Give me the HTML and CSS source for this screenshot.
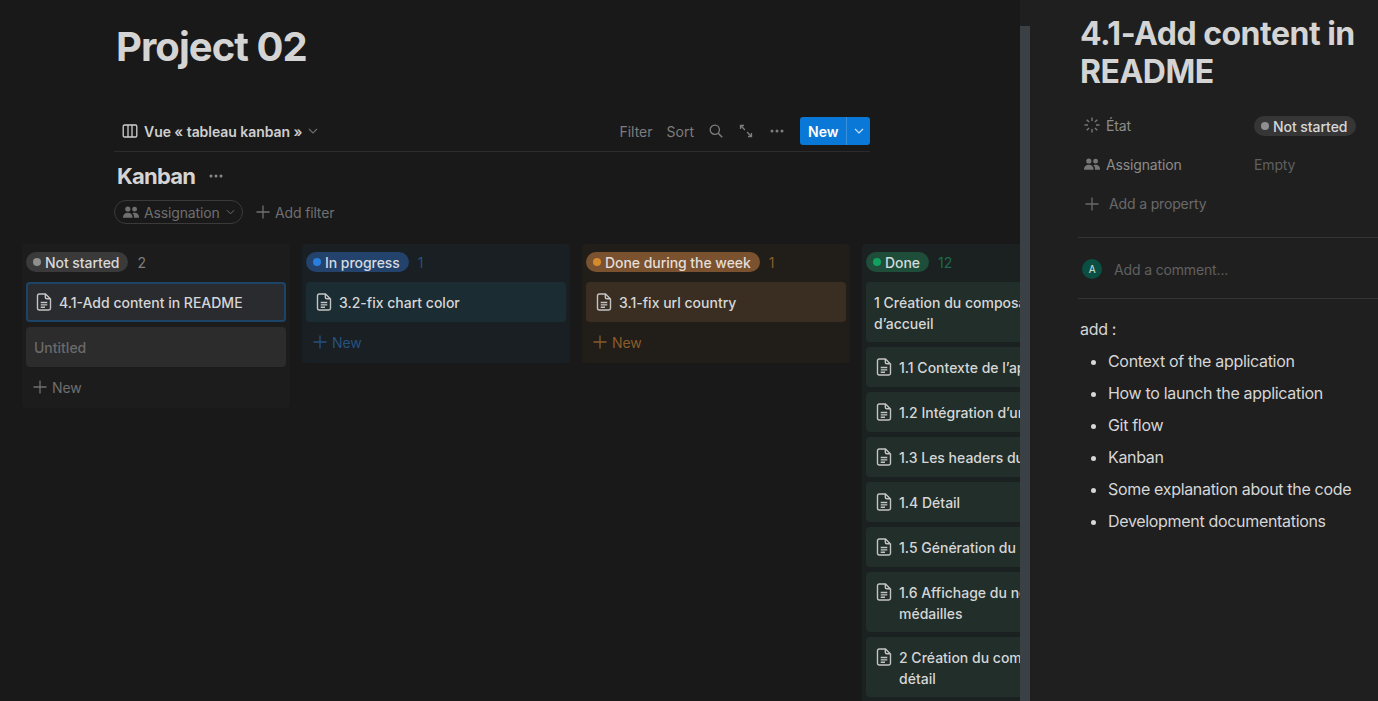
FILE: index.html
```html
<!DOCTYPE html>
<html lang="en">
<head>
    <meta charset="UTF-8">
    <title>Project 02</title>
    <link rel="stylesheet" href="styles.css">
</head>
<body>
    <svg class="icon-defs" width="0" height="0">
        <symbol id="i-page" viewBox="0 0 16 18">
            <path d="M3.200 1h6.300L14.500 6v9.300c0 1-.7 1.700-1.700 1.700H3.200c-1 0-1.700-.7-1.700-1.700V2.700c0-1 .7-1.700 1.700-1.700z M9.300 1.200v3.100c0 .9.600 1.500 1.500 1.500h3.500 M4.700 9.500h6.600 M4.700 11.900h6.600 M4.700 14.300h4.300" fill="none" stroke="currentColor" stroke-width="1.400"/>
        </symbol>
        <symbol id="i-plus" viewBox="0 0 14 14">
            <path d="M7 .5v13M.5 7h13" fill="none" stroke="currentColor" stroke-width="1.300"/>
        </symbol>
        <symbol id="i-people" viewBox="0 0 16 12">
            <circle cx="4.800" cy="3" r="2.600" fill="currentColor"/>
            <circle cx="11.600" cy="3.200" r="2.400" fill="currentColor"/>
            <path d="M0 11.200c0-2.700 2-4.500 4.800-4.500s4.800 1.800 4.800 4.500v.6H0zM11 11.800v-1c0-1.400-.5-2.700-1.500-3.600.6-.3 1.300-.4 2.100-.4 2.600 0 4.400 1.800 4.400 4.300v.7z" fill="currentColor"/>
        </symbol>
        <symbol id="i-chevron" viewBox="0 0 10 6">
            <path d="M1 1l4 4 4-4" fill="none" stroke="currentColor" stroke-width="1.100"/>
        </symbol>
        <symbol id="i-dots" viewBox="0 0 14 4">
            <circle cx="2" cy="2" r="1.500" fill="currentColor"/>
            <circle cx="7" cy="2" r="1.500" fill="currentColor"/>
            <circle cx="12" cy="2" r="1.500" fill="currentColor"/>
        </symbol>
    </svg>

    <div class="app">
        <main class="main">
            <h1 class="page-title">Project 02</h1>

            <div class="toolbar">
                <div class="view-tab">
                    <svg class="icon-table" viewBox="0 0 16 14"><path d="M2.500 1h11c.8 0 1.300.5 1.300 1.300v9.400c0 .8-.5 1.300-1.300 1.300h-11c-.8 0-1.300-.5-1.300-1.300V2.300C1.200 1.500 1.700 1 2.500 1zM6 1v12M10 1v12" fill="none" stroke="currentColor" stroke-width="1.300"/></svg>
                    <span>Vue « tableau kanban »</span>
                    <svg class="icon-chev"><use href="#i-chevron"/></svg>
                </div>
                <div class="actions">
                    <span>Filter</span>
                    <span class="sort">Sort</span>
                    <svg class="icon-search" viewBox="0 0 14 14"><circle cx="5.800" cy="5.800" r="4.600" fill="none" stroke="currentColor" stroke-width="1.300"/><path d="M9.200 9.200l4 4" stroke="currentColor" stroke-width="1.500"/></svg>
                    <svg class="icon-expand" viewBox="0 0 14 14"><path d="M1.500 5V1.500H5M1.500 1.500l4.500 4.500M12.500 9v3.500H9M12.500 12.500L8 8" fill="none" stroke="currentColor" stroke-width="1.300"/></svg>
                    <svg class="icon-dots"><use href="#i-dots"/></svg>
                    <div class="new-btn">
                        <span class="new-label">New</span>
                        <span class="new-arrow"><svg class="icon-chev"><use href="#i-chevron"/></svg></span>
                    </div>
                </div>
            </div>

            <div class="board-title">
                <h2>Kanban</h2>
                <svg class="icon-dots"><use href="#i-dots"/></svg>
            </div>

            <div class="filters">
                <div class="filter-pill">
                    <svg class="icon-people"><use href="#i-people"/></svg>
                    <span>Assignation</span>
                    <svg class="icon-chev"><use href="#i-chevron"/></svg>
                </div>
                <div class="add-filter">
                    <svg class="icon-plus"><use href="#i-plus"/></svg>
                    <span>Add filter</span>
                </div>
            </div>

            <div class="board">
                <section class="column col-grey">
                    <div class="col-head"><span class="pill"><i class="dot"></i>Not started</span><span class="count">2</span></div>
                    <div class="card selected"><svg class="icon-page"><use href="#i-page"/></svg><span>4.1-Add content in README</span></div>
                    <div class="card untitled"><span>Untitled</span></div>
                    <div class="col-new"><svg class="icon-plus"><use href="#i-plus"/></svg><span>New</span></div>
                </section>

                <section class="column col-blue">
                    <div class="col-head"><span class="pill"><i class="dot"></i>In progress</span><span class="count">1</span></div>
                    <div class="card"><svg class="icon-page"><use href="#i-page"/></svg><span>3.2-fix chart color</span></div>
                    <div class="col-new"><svg class="icon-plus"><use href="#i-plus"/></svg><span>New</span></div>
                </section>

                <section class="column col-orange">
                    <div class="col-head"><span class="pill"><i class="dot"></i>Done during the week</span><span class="count">1</span></div>
                    <div class="card"><svg class="icon-page"><use href="#i-page"/></svg><span>3.1-fix url country</span></div>
                    <div class="col-new"><svg class="icon-plus"><use href="#i-plus"/></svg><span>New</span></div>
                </section>

                <section class="column col-green">
                    <div class="col-head"><span class="pill"><i class="dot"></i>Done</span><span class="count">12</span></div>
                    <div class="card two-line no-icon"><span>1 Création du composant de la page d’accueil</span></div>
                    <div class="card"><svg class="icon-page"><use href="#i-page"/></svg><span class="clip">1.1 Contexte de l’application</span></div>
                    <div class="card"><svg class="icon-page"><use href="#i-page"/></svg><span class="clip">1.2 Intégration d’une librairie</span></div>
                    <div class="card"><svg class="icon-page"><use href="#i-page"/></svg><span class="clip">1.3 Les headers du tableau</span></div>
                    <div class="card"><svg class="icon-page"><use href="#i-page"/></svg><span class="clip">1.4 Détail</span></div>
                    <div class="card"><svg class="icon-page"><use href="#i-page"/></svg><span class="clip">1.5 Génération du graphique</span></div>
                    <div class="card two-line"><svg class="icon-page"><use href="#i-page"/></svg><span>1.6 Affichage du nombre de<br>médailles</span></div>
                    <div class="card two-line"><svg class="icon-page"><use href="#i-page"/></svg><span>2 Création du composant de<br>détail</span></div>
                </section>
            </div>
        </main>

        <aside class="panel">
            <div class="scrollbar"></div>
            <h2 class="panel-title">4.1-Add content in README</h2>

            <div class="props">
                <div class="prop first">
                    <div class="prop-name">
                        <svg class="prop-icon" viewBox="0 0 16 16"><path d="M8 .5v3.500M8 12v3.500M.5 8H4M12 8h3.500M2.700 2.700l2.400 2.400M10.900 10.900l2.400 2.400M2.700 13.300l2.400-2.400M10.900 5.100l2.400-2.400" fill="none" stroke="currentColor" stroke-width="1.400"/></svg>
                        <span>État</span>
                    </div>
                    <span class="pill pill-prop"><i class="dot"></i>Not started</span>
                </div>
                <div class="prop">
                    <div class="prop-name">
                        <svg class="prop-icon people"><use href="#i-people"/></svg>
                        <span>Assignation</span>
                    </div>
                    <span class="empty">Empty</span>
                </div>
                <div class="add-prop">
                    <svg class="icon-plus"><use href="#i-plus"/></svg>
                    <span>Add a property</span>
                </div>
            </div>

            <div class="comment">
                <span class="avatar">A</span>
                <span>Add a comment...</span>
            </div>

            <div class="body-text">
                <p>add :</p>
                <ul>
                    <li>Context of the application</li>
                    <li>How to launch the application</li>
                    <li>Git flow</li>
                    <li>Kanban</li>
                    <li>Some explanation about the code</li>
                    <li>Development documentations</li>
                </ul>
            </div>
        </aside>
    </div>
</body>
</html>
```

FILE: styles.css
```css
* {
    box-sizing: border-box;
}

html, body {
    height: 100%;
}

body {
    margin: 0;
    overflow: hidden;
    background-color: #191919;
    color: rgba(255,255,255,0.81);
    font-family: Inter, "Liberation Sans", sans-serif;
    font-size: 14px;
}

svg {
    display: block;
    flex-shrink: 0;
}

.icon-defs {
    position: absolute;
}

.app {
    display: flex;
    height: 701px;
}

/* left side */
.main {
    width: 1020px;
    height: 701px;
    overflow: hidden;
    flex-shrink: 0;
}

.page-title {
    margin: 0;
    padding: 23px 0 0 116px;
    height: 114px;
    font-size: 40px;
    line-height: 48px;
    font-weight: 700;
    letter-spacing: -0.95px;
    color: #d4d4d4;
}

.toolbar {
    display: flex;
    justify-content: space-between;
    align-items: center;
    margin-left: 114px;
    width: 756px;
    height: 38px;
    padding: 0 0 3px 8px;
    border-bottom: 1px solid #2c2c2c;
}

.view-tab {
    display: flex;
    align-items: center;
    font-weight: 600;
    letter-spacing: -0.05px;
    color: #cfcfcf;
}

.icon-table {
    width: 16px;
    height: 14px;
    margin-right: 6px;
}

.view-tab .icon-chev {
    margin-left: 6px;
    color: #6e6e6e;
}

.icon-chev {
    width: 10px;
    height: 6px;
}

.actions {
    display: flex;
    align-items: center;
    color: #7d7d7d;
}

.sort {
    margin-left: 14px;
}

.icon-search {
    width: 14px;
    height: 14px;
    margin-left: 15px;
}

.icon-expand {
    width: 14px;
    height: 14px;
    margin-left: 16px;
}

.icon-dots {
    width: 14px;
    height: 4px;
}

.actions .icon-dots {
    margin-left: 17px;
}

.new-btn {
    display: flex;
    align-items: stretch;
    height: 28px;
    margin-left: 16px;
    border-radius: 3px;
    background-color: #0a78d6;
    color: white;
    font-weight: 600;
}

.new-label {
    display: flex;
    align-items: center;
    padding: 0 8px;
    width: 47px;
    border-right: 1px solid #3a8fdb;
}

.new-arrow {
    display: flex;
    align-items: center;
    justify-content: center;
    width: 23px;
}

.new-arrow .icon-chev {
    color: #cfe4f7;
}

.board-title {
    display: flex;
    align-items: center;
    height: 48px;
    margin-left: 117px;
}

.board-title h2 {
    margin: 0;
    font-size: 22px;
    font-weight: 700;
    letter-spacing: -0.8px;
    color: #d4d4d4;
}

.board-title .icon-dots {
    margin-left: 14px;
    color: #8a8a8a;
}

.filters {
    display: flex;
    align-items: center;
    height: 24px;
    margin: 0 0 20px 114px;
    color: #6f6f6f;
    letter-spacing: -0.15px;
}

.filter-pill {
    display: flex;
    align-items: center;
    height: 24px;
    width: 129px;
    padding-left: 8px;
    border: 1px solid #3a3a3a;
    border-radius: 12px;
}

.icon-people {
    width: 16px;
    height: 12px;
    margin-right: 5px;
}

.filter-pill .icon-chev {
    margin-left: 6px;
    width: 9px;
}

.add-filter {
    display: flex;
    align-items: center;
    margin-left: 13px;
}

.icon-plus {
    width: 14px;
    height: 14px;
    margin-right: 5px;
}

/* kanban board */
.board {
    display: flex;
    gap: 12px;
    padding-left: 22px;
}

.column {
    width: 268px;
    flex-shrink: 0;
    padding: 8px 4px 6px;
    border-radius: 4px;
    align-self: flex-start;
}

.col-grey { background-color: #1c1c1c; }
.col-blue { background-color: #1a1f23; }
.col-orange { background-color: #211d19; }
.col-green { background-color: #1b2120; min-height: 460px; }

.col-head {
    display: flex;
    align-items: center;
    height: 20px;
    margin-bottom: 10px;
}

.pill {
    display: inline-flex;
    align-items: center;
    height: 20px;
    padding: 0 9px 0 7px;
    border-radius: 10px;
    font-weight: 500;
    letter-spacing: -0.05px;
    white-space: nowrap;
}

.dot {
    width: 8px;
    height: 8px;
    margin-right: 4px;
    border-radius: 50%;
}

.count {
    margin-left: 9px;
}

.card {
    display: flex;
    align-items: flex-start;
    width: 260px;
    margin-bottom: 5px;
    padding: 10px 10px 9px;
    border-radius: 4px;
    line-height: 21px;
    font-weight: 500;
    color: #d6d6d6;
}

.card.two-line {
    padding-bottom: 8px;
}

.card .icon-page {
    width: 16px;
    height: 18px;
    margin: 1px 7px 0 0;
    color: #c4c4c4;
}

.card.no-icon {
    padding-left: 8px;
}

.clip {
    white-space: nowrap;
}

.col-new {
    display: flex;
    align-items: center;
    height: 30px;
    padding-left: 7px;
    letter-spacing: -0.15px;
}

.col-grey .pill { background-color: #3a3a3a; }
.col-grey .dot { background-color: #8f8f8f; }
.col-grey .count { color: #7d7d7d; }
.col-grey .col-new { color: #6f6f6f; }

.card.selected {
    background-color: #2a2b2f;
    box-shadow: inset 0 0 0 2px #1c4466;
}

.card.untitled {
    background-color: #2c2c2c;
    padding-left: 8px;
    color: #6a6a6a;
}

.col-blue .pill { background-color: #23426c; }
.col-blue .dot { background-color: #2a7fde; }
.col-blue .count { color: #25527f; }
.col-blue .card { background-color: #1c2c33; }
.col-blue .col-new { color: #25527f; }

.col-orange .pill { background-color: #7a5230; }
.col-orange .dot { background-color: #d58a2c; }
.col-orange .count { color: #8a5c2a; }
.col-orange .card { background-color: #3a2e23; }
.col-orange .col-new { color: #8a5c2a; }

.col-green .pill { background-color: #1e4d3a; }
.col-green .dot { background-color: #12a05f; }
.col-green .count { color: #1c6a4a; }
.col-green .card { background-color: #212e2a; }

/* detail panel */
.panel {
    position: relative;
    width: 358px;
    height: 701px;
    flex-shrink: 0;
    padding-left: 60px;
    overflow: hidden;
    background-color: #1f1f1f;
}

.scrollbar {
    position: absolute;
    left: 0;
    top: 26px;
    bottom: 0;
    width: 10px;
    background-color: #3b4044;
}

.panel-title {
    margin: 15px 0 0;
    width: 290px;
    font-size: 32px;
    line-height: 38px;
    font-weight: 700;
    letter-spacing: -0.5px;
    color: #d4d4d4;
}

.props {
    margin: 0 0 0 -2px;
    padding: 22px 0 0 6px;
    height: 147px;
    border-bottom: 1px solid #343434;
    letter-spacing: -0.15px;
}

.prop {
    display: flex;
    height: 40px;
    padding-top: 2px;
}

.prop.first {
    height: 39px;
}

.prop-name {
    display: flex;
    align-items: center;
    width: 170px;
    height: 20px;
    color: #8c8c8c;
}

.prop-icon {
    width: 16px;
    height: 16px;
    margin-right: 6px;
    color: #777;
}

.prop-icon.people {
    height: 12px;
}

.pill-prop {
    margin-top: 1px;
    background-color: #363636;
}

.pill-prop .dot {
    background-color: #8f8f8f;
}

.empty {
    margin-top: 2px;
    color: #5f5f5f;
}

.add-prop {
    display: flex;
    align-items: center;
    margin-top: 3px;
    padding-left: 1px;
    color: #6a6a6a;
}

.add-prop .icon-plus {
    margin-right: 10px;
}

.comment {
    display: flex;
    align-items: center;
    margin-left: -2px;
    height: 61px;
    padding: 2px 0 0 4px;
    border-bottom: 1px solid #343434;
    color: #606060;
    letter-spacing: -0.15px;
}

.avatar {
    display: flex;
    align-items: center;
    justify-content: center;
    width: 20px;
    height: 20px;
    margin-right: 12px;
    border-radius: 50%;
    background-color: #0b4f43;
    color: #d8e8e4;
    font-size: 10px;
}

.body-text {
    font-size: 16px;
    line-height: 32px;
    letter-spacing: -0.32px;
    color: #d6d6d6;
}

.body-text p {
    margin: 14px 0 0;
}

.body-text ul {
    margin: 0;
    padding-left: 28px;
}
```
